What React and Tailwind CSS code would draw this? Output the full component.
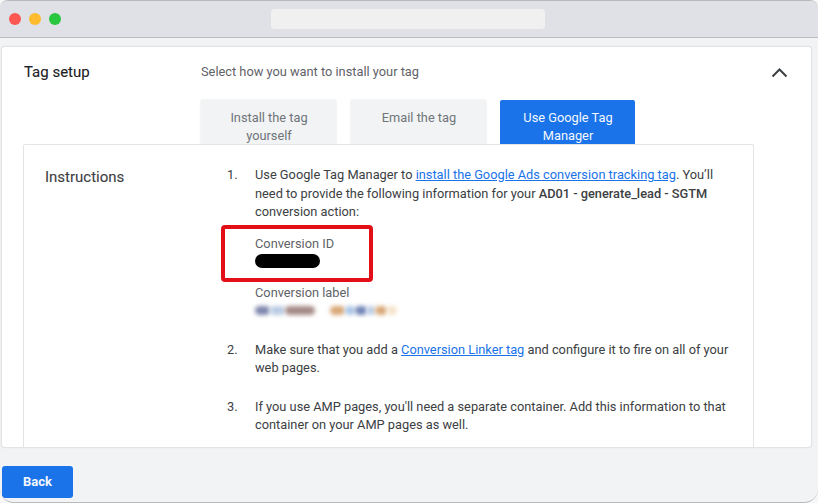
import React from "react";

function Tab({ children, active }) {
  return (
    <div
      className={
        "h-[44px] w-[135px] overflow-hidden rounded-t-[2px] pl-[13px] pr-[12px] pt-[9px] text-center text-[12.8px] leading-[18px] " +
        (active
          ? "-ml-px bg-[#1a73e8] text-[#f4f8fe]"
          : "bg-[#f1f3f4] text-[#70757a] shadow-[0_0_2px_rgba(60,64,67,0.2)]")
      }
    >
      {children}
    </div>
  );
}

const link = "text-[#1a73e8] underline";
const b = "font-medium text-[#3c4043]";

function Smear({ className }) {
  return <span className={"block h-[9px] rounded-full blur-[2px] " + className} />;
}

export default function App() {
  return (
    <div className="h-[503px] w-[818px] overflow-hidden bg-[#f7f7f8] font-['Roboto',sans-serif]">
      <div className="flex h-[503px] w-[818px] flex-col overflow-hidden rounded-t-[8px] rounded-b-[14px] border-y border-[#b9babd] bg-[#f1f3f4]">
        <header className="flex h-[37px] shrink-0 items-center border-b border-[#bcbdc0] bg-[#dfe1e6] pl-[9px]">
          <div className="flex gap-[8px]">
            <span className="h-[12px] w-[12px] rounded-full bg-[#fd5754]" />
            <span className="h-[12px] w-[12px] rounded-full bg-[#febb2e]" />
            <span className="h-[12px] w-[12px] rounded-full bg-[#29c73f]" />
          </div>
          <div className="ml-[210px] h-[20px] w-[274px] rounded-[4px] bg-[#f0f0f1]" />
        </header>

        <main className="ml-[2px] mt-[9px] mr-[7px] flex h-[400px] flex-col rounded-[2px] bg-white shadow-[0_0_1.5px_rgba(60,64,67,0.45)]">
          <div className="relative flex h-[53px] shrink-0 pl-[22px] pt-[14px]">
            <h2 className="w-[177px] text-[15px] font-normal leading-[22px] text-[#202124] [-webkit-text-stroke:0.1px_#202124]">Tag setup</h2>
            <p className="mt-px text-[12.8px] leading-[20px] text-[#5f6368]">Select how you want to install your tag</p>
            <svg className="absolute right-[20px] top-[14px]" width="24" height="24" viewBox="0 0 24 24" fill="none" stroke="#3c4043" strokeWidth="2">
              <path d="M5.5 15.5 12.5 8.5 19.5 15.5" />
            </svg>
          </div>
          <div className="flex h-[44px] shrink-0 gap-[15px] pl-[199px]">
            <Tab>Install the tag yourself</Tab>
            <Tab>Email the tag</Tab>
            <Tab active>Use Google Tag Manager</Tab>
          </div>
          <section className="ml-[21px] flex min-h-0 w-[731px] flex-1 rounded-t-[2px] border border-b-0 border-[#e3e4e6] bg-white pl-[21px]">
            <h3 className="w-[182px] shrink-0 pt-[22px] text-[15px] font-normal leading-[20px] text-[#3c4043] [-webkit-text-stroke:0.1px_#3c4043]">Instructions</h3>
            <ol className="w-[506px] pt-[21px] text-[12.8px] leading-[18.5px] text-[#3c4043]">
              <li className="flex">
                <span className="w-[28px] shrink-0">1.</span>
                <div>
                  <p>
                    Use Google Tag Manager to <span className={link}>install the Google Ads conversion tracking tag</span>. You’ll need to provide the following information for your <span className={b}>AD01 - generate_lead - SGTM</span> conversion action:
                  </p>
                  <div className="relative mt-[13px] leading-[18px] text-[#5f6368]">
                    <div className="absolute left-[-34px] top-[-10px] h-[57px] w-[152px] rounded-[4px] border-[4px] border-[#e30f16]" />
                    <p>Conversion ID</p>
                    <span className="mt-[1px] block h-[14px] w-[65px] rounded-full bg-black" />
                    <p className="mt-[16px]">Conversion label</p>
                    <div className="flex h-[18px] items-center">
                      <div className="flex w-[75px]">
                        <Smear className="w-[15px] bg-[#7f86ad]" />
                        <Smear className="w-[15px] bg-[#b9cbe4]" />
                        <Smear className="w-[30px] bg-[#a58a86]" />
                      </div>
                      <div className="flex">
                        <Smear className="w-[15px] bg-[#d9a777]" />
                        <Smear className="w-[10px] bg-[#a9c4e6]" />
                        <Smear className="w-[12px] bg-[#6f83b5]" />
                        <Smear className="w-[8px] bg-[#b9cbe4]" />
                        <Smear className="w-[12px] bg-[#d8a878]" />
                        <Smear className="w-[10px] bg-[#f4e3c8]" />
                      </div>
                    </div>
                  </div>
                </div>
              </li>
              <li className="mt-[21px] flex">
                <span className="w-[28px] shrink-0">2.</span>
                <p>
                  Make sure that you add a <span className={link}>Conversion Linker tag</span> and configure it to fire on all of your web pages.
                </p>
              </li>
              <li className="mt-[20px] flex">
                <span className="w-[28px] shrink-0">3.</span>
                <p>
                  If you use AMP pages, you'll need a separate container. Add this information to that container on your AMP pages as well.
                </p>
              </li>
            </ol>
          </section>
        </main>

        <div className="mt-[19px] ml-[2px]">
          <button className="h-[32px] w-[71px] rounded-[3px] bg-[#1a73e8] text-[13px] font-bold text-[#f4f8fe]">Back</button>
        </div>
      </div>
    </div>
  );
}
